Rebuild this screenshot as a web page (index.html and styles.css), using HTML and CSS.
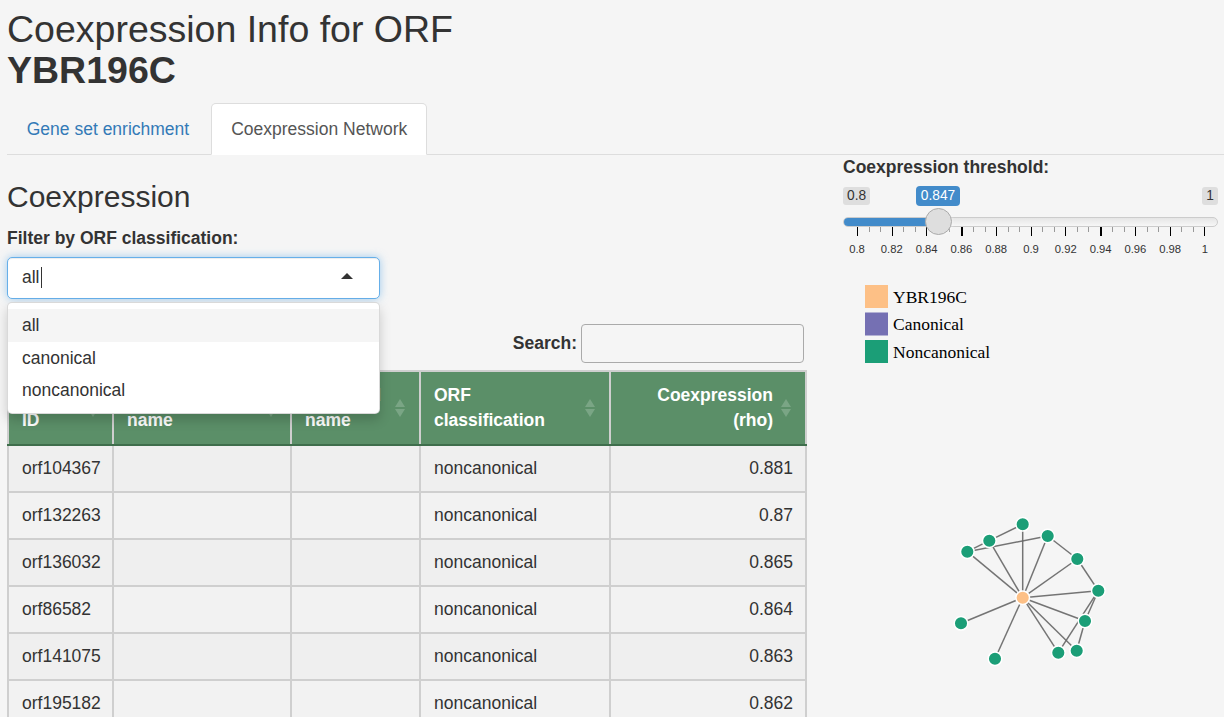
FILE: index.html
```html
<!DOCTYPE html>
<html lang="en">
<head>
<meta charset="utf-8">
<title>Coexpression Info</title>
<link rel="stylesheet" href="styles.css">
</head>
<body>
<div class="page">
  <h2 class="title">Coexpression Info for ORF<br><b>YBR196C</b></h2>
  <ul class="tabs">
    <li class="tab"><a>Gene set enrichment</a></li>
    <li class="tab active"><a>Coexpression Network</a></li>
  </ul>
  <div class="content">
    <div class="main">
      <h3 class="section">Coexpression</h3>
      <label class="label">Filter by ORF classification:</label>
      <div class="select">
        <div class="select-input"><span class="val">all</span><span class="cursor"></span><span class="caret"></span></div>
        <div class="dropdown">
          <div class="opt hl">all</div>
          <div class="opt">canonical</div>
          <div class="opt">noncanonical</div>
        </div>
      </div>
      <div class="filter"><label class="search-label">Search:</label><input class="search" type="text"></div>
      <table class="grid">
        <colgroup><col class="c1"><col class="c2"><col class="c3"><col class="c4"><col class="c5"></colgroup>
        <thead>
          <tr>
            <th>ORF<br>ID<span class="sort"></span></th>
            <th>Gene<br>name<span class="sort"></span></th>
            <th>Standard<br>name<span class="sort"></span></th>
            <th>ORF<br>classification<span class="sort"></span></th>
            <th class="num">Coexpression<br>(rho)<span class="sort"></span></th>
          </tr>
        </thead>
        <tbody>
          <tr><td>orf104367</td><td></td><td></td><td>noncanonical</td><td class="num">0.881</td></tr>
          <tr><td>orf132263</td><td></td><td></td><td>noncanonical</td><td class="num">0.87</td></tr>
          <tr><td>orf136032</td><td></td><td></td><td>noncanonical</td><td class="num">0.865</td></tr>
          <tr><td>orf86582</td><td></td><td></td><td>noncanonical</td><td class="num">0.864</td></tr>
          <tr><td>orf141075</td><td></td><td></td><td>noncanonical</td><td class="num">0.863</td></tr>
          <tr><td>orf195182</td><td></td><td></td><td>noncanonical</td><td class="num">0.862</td></tr>
        </tbody>
      </table>
    </div>
    <div class="side">
      <label class="label side-label">Coexpression threshold:</label>
      <div class="slider">
        <div class="minmax"><span class="irs-min">0.8</span><span class="irs-max">1</span></div>
        <span class="irs-single">0.847</span>
        <div class="track"><div class="bar" style="width:95px"></div></div>
        <span class="handle"></span>
        <div class="ticks">
          <i class="big"></i><i></i><i></i><i class="big"></i><i></i><i></i><i class="big"></i><i></i><i></i><i class="big thick"></i><i></i><i></i><i class="big"></i><i></i><i></i><i class="big"></i><i></i><i></i><i class="big"></i><i></i><i></i><i class="big thick"></i><i></i><i></i><i class="big"></i><i></i><i></i><i class="big"></i><i></i><i></i><i class="big"></i>
        </div>
        <div class="ticklabels">
          <span>0.8</span><span>0.82</span><span>0.84</span><span>0.86</span><span>0.88</span><span>0.9</span><span>0.92</span><span>0.94</span><span>0.96</span><span>0.98</span><span>1</span>
        </div>
      </div>
      <svg class="net" width="381" height="457" viewBox="0 0 381 457">
        <g class="legend">
          <rect x="22" y="25" width="23" height="23" fill="#fdc086"/>
          <rect x="22" y="52.5" width="23" height="23" fill="#7570b3"/>
          <rect x="22" y="80" width="23" height="23" fill="#1b9e77"/>
          <text x="50" y="42.5">YBR196C</text>
          <text x="50" y="70">Canonical</text>
          <text x="50" y="97.5">Noncanonical</text>
        </g>
        <g class="edges">
          <line x1="179.7" y1="337.7" x2="179.7" y2="264.3"/>
          <line x1="179.7" y1="337.7" x2="146.3" y2="280.7"/>
          <line x1="179.7" y1="337.7" x2="124.3" y2="291.7"/>
          <line x1="179.7" y1="337.7" x2="204.7" y2="276"/>
          <line x1="179.7" y1="337.7" x2="234.3" y2="299"/>
          <line x1="179.7" y1="337.7" x2="255.3" y2="330.7"/>
          <line x1="179.7" y1="337.7" x2="242" y2="361"/>
          <line x1="179.7" y1="337.7" x2="233.7" y2="390.7"/>
          <line x1="179.7" y1="337.7" x2="215.3" y2="392.7"/>
          <line x1="179.7" y1="337.7" x2="152" y2="398.7"/>
          <line x1="179.7" y1="337.7" x2="118" y2="363.3"/>
          <line x1="124.3" y1="291.7" x2="146.3" y2="280.7"/>
          <line x1="146.3" y1="280.7" x2="179.7" y2="264.3"/>
          <line x1="124.3" y1="291.7" x2="204.7" y2="276"/>
          <line x1="204.7" y1="276" x2="234.3" y2="299"/>
          <line x1="234.3" y1="299" x2="255.3" y2="330.7"/>
          <line x1="255.3" y1="330.7" x2="242" y2="361"/>
          <line x1="255.3" y1="330.7" x2="215.3" y2="392.7"/>
          <line x1="242" y1="361" x2="233.7" y2="390.7"/>
        </g>
        <g class="nodes">
          <circle cx="179.7" cy="264.3" r="6.8"/>
          <circle cx="146.3" cy="280.7" r="6.8"/>
          <circle cx="124.3" cy="291.7" r="6.8"/>
          <circle cx="204.7" cy="276" r="6.8"/>
          <circle cx="234.3" cy="299" r="6.8"/>
          <circle cx="255.3" cy="330.7" r="6.8"/>
          <circle cx="242" cy="361" r="6.8"/>
          <circle cx="233.7" cy="390.7" r="6.8"/>
          <circle cx="215.3" cy="392.7" r="6.8"/>
          <circle cx="152" cy="398.7" r="6.8"/>
          <circle cx="118" cy="363.3" r="6.8"/>
          <circle class="focus" cx="179.7" cy="337.7" r="6.8"/>
        </g>
      </svg>
    </div>
  </div>
</div>
</body>
</html>
```
FILE: styles.css
```css
html, body {
  margin: 0;
  padding: 0;
  overflow: hidden;
  background: #f5f5f5;
}
body {
  font-family: "Liberation Sans", Arial, sans-serif;
  font-size: 17.5px;
  line-height: 25px;
  color: #333;
}
.page {
  padding: 0 0 0 7px;
}
.title {
  margin: 0;
  padding-top: 8.5px;
  font-size: 37.5px;
  line-height: 41px;
  font-weight: 400;
}
.title b { font-weight: 700; }

.tabs {
  list-style: none;
  margin: 12.5px 0 0 0;
  padding: 0;
  display: flex;
  border-bottom: 1px solid #ddd;
}
.tab {
  margin-right: 2.5px;
  margin-bottom: -1px;
}
.tab a {
  display: block;
  padding: 12.5px 18.75px;
  line-height: 25px;
  border: 1px solid transparent;
  border-radius: 5px 5px 0 0;
  color: #337ab7;
}
.tab.active a {
  background: #fff;
  border-color: #ddd;
  border-bottom-color: transparent;
  color: #555;
}

.content {
  display: grid;
  grid-template-columns: 798px 375px;
  column-gap: 38px;
}
.main { min-width: 0; }
.section {
  margin: 25px 0 12.5px 0;
  font-size: 30px;
  line-height: 33px;
  font-weight: 400;
}
.label {
  display: block;
  font-weight: 700;
  line-height: 25px;
  margin-bottom: 6.25px;
}
.side-label { margin-bottom: 0; }

.select {
  position: relative;
  width: 373px;
}
.select-input {
  box-sizing: border-box;
  height: 42px;
  background: #fff;
  border: 1px solid #66afe9;
  border-radius: 5px;
  box-shadow: inset 0 1px 1px rgba(0,0,0,.075), 0 0 8px rgba(102,175,233,.6);
  padding: 0 14px;
  display: flex;
  align-items: center;
}
.val { color: #333; }
.cursor {
  display: inline-block;
  width: 1px;
  height: 21px;
  background: #333;
  margin-left: 1px;
}
.caret {
  margin-left: auto;
  margin-right: 12px;
  width: 0;
  height: 0;
  border-left: 6px solid transparent;
  border-right: 6px solid transparent;
  border-bottom: 6px solid #333;
  margin-top: -3px;
}
.dropdown {
  position: absolute;
  left: 0;
  top: 45px;
  width: 373px;
  box-sizing: border-box;
  background: #fff;
  border: 1px solid rgba(0,0,0,.15);
  border-radius: 5px;
  box-shadow: 0 6px 12px rgba(0,0,0,.175);
  padding: 6.5px 0 6px 0;
  z-index: 5;
}
.opt {
  padding: 3.75px 14px;
  line-height: 25px;
  color: #333;
}
.opt.hl { background: #f5f5f5; }

.filter {
  margin-top: 25px;
  display: flex;
  justify-content: flex-end;
  align-items: center;
  gap: 4px;
  padding-right: 1px;
}
.search-label { font-weight: 700; }
.search {
  box-sizing: border-box;
  width: 223px;
  height: 39px;
  border: 1px solid #aaa;
  border-radius: 4px;
  background: transparent;
  padding: 0 6px;
  font: inherit;
}

.grid {
  margin-top: 7px;
  width: 798px;
  table-layout: fixed;
  border-collapse: collapse;
}
.c1 { width: 105px; }
.c2 { width: 178px; }
.c3 { width: 129px; }
.c4 { width: 190px; }
.c5 { width: 196px; }
.grid th {
  position: relative;
  background: #5b8f68;
  color: #fff;
  font-weight: 700;
  text-align: left;
  padding: 11px 32px 11px 13px;
  line-height: 25px;
  border: 2px solid #cfcfcf;
  border-bottom: 2px solid #3f6e4c;
}
.grid td {
  padding: 10px 13px;
  line-height: 25px;
  border: 2px solid #cfcfcf;
  background: #efefef;
  height: 25px;
}
.grid tbody tr:nth-child(even) td { background: #f2f2f2; }
.grid .num { text-align: right; }
.grid td.num { padding-right: 12px; }
.sort {
  position: absolute;
  right: 14px;
  top: 50%;
  margin-top: -9px;
  width: 10px;
  height: 18px;
}
.sort::before, .sort::after {
  content: "";
  position: absolute;
  left: 0;
  border-left: 5px solid transparent;
  border-right: 5px solid transparent;
}
.sort::before { top: 0; border-bottom: 8px solid #7aa585; }
.sort::after { bottom: 0; border-top: 8px solid #7aa585; }

/* slider */
.side { min-width: 0; }
.slider {
  position: relative;
  height: 73px;
  padding-top: 7px;
}
.minmax {
  display: flex;
  justify-content: space-between;
  height: 18px;
}
.irs-min, .irs-max {
  background: #dedede;
  color: #333;
  font-size: 13.75px;
  line-height: 18px;
  padding: 0 4px;
  border-radius: 3px;
}
.irs-single {
  position: absolute;
  left: 73px;
  top: 6px;
  width: 44px;
  height: 20px;
  line-height: 20px;
  text-align: center;
  background: #428bca;
  color: #fff;
  font-size: 13.75px;
  border-radius: 4px;
}
.track {
  box-sizing: border-box;
  margin-top: 12px;
  height: 10px;
  border: 1px solid #cccccc;
  border-radius: 5px;
  background: linear-gradient(to bottom, #dddddd -50%, #ffffff 150%);
  overflow: hidden;
}
.bar {
  height: 100%;
  background: #428bca;
  margin: -1px 0 0 -1px;
  padding-bottom: 2px;
}
.handle {
  position: absolute;
  left: 81.5px;
  top: 27.5px;
  box-sizing: border-box;
  width: 27px;
  height: 27px;
  border-radius: 50%;
  background: #dedede;
  border: 1px solid #aaa;
  box-shadow: 1px 1px 3px rgba(255,255,255,.3);
}
.ticks {
  margin-left: 14px;
  width: 348px;
  height: 9px;
  display: flex;
  justify-content: space-between;
  align-items: flex-start;
}
.ticks i {
  display: block;
  width: 1px;
  height: 5px;
  background: #999;
}
.ticks i.big {
  height: 9px;
  background: #000;
}
.ticks i.thick { width: 2px; }
.ticklabels {
  margin-top: 6px;
  margin-left: -1px;
  width: 378px;
  display: flex;
  justify-content: space-between;
}
.ticklabels span {
  width: 30px;
  text-align: center;
  font-size: 11.25px;
  line-height: 14px;
  color: #333;
}

.net {
  display: block;
  margin-left: 0;
}
.legend text {
  font-family: "Liberation Serif", "Times New Roman", serif;
  font-size: 17.5px;
  fill: #000;
}
.edges line {
  stroke: #666;
  stroke-width: 1.5;
  stroke-opacity: .9;
}
.nodes circle {
  fill: #1b9e77;
  stroke: #fff;
  stroke-width: 1.5;
}
.nodes circle.focus { fill: #fdc086; }
```
